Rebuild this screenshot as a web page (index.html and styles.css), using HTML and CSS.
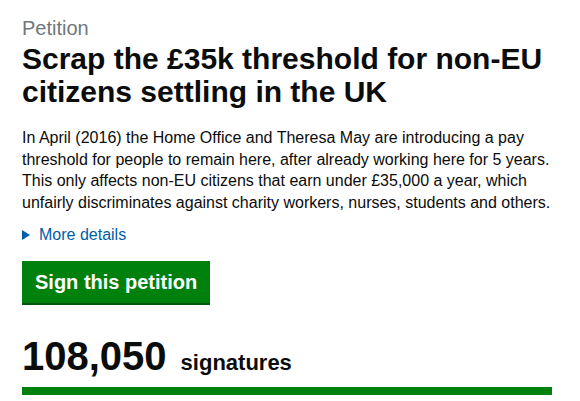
FILE: index.html
```html
<!DOCTYPE html>
<html lang="en">
<head>
<meta charset="utf-8">
<title>Petition</title>
<link rel="stylesheet" href="styles.css">
</head>
<body>
<main class="page">
  <p class="caption">Petition</p>
  <h1 class="title">Scrap the £35k threshold for non-EU citizens settling in the UK</h1>
  <p class="lede">In April (2016) the Home Office and Theresa May are introducing a pay threshold for people to remain here, after already working here for 5 years. This only affects non-EU citizens that earn under £35,000 a year, which unfairly discriminates against charity workers, nurses, students and others.</p>
  <a class="details" href="#"><span class="arrow"></span>More details</a>
  <div class="actions"><a class="button" href="#">Sign this petition</a></div>
  <p class="count"><span class="count-num">108,050</span> <span class="count-label">signatures</span></p>
  <div class="progress"><div class="progress-bar" style="width:100%"></div></div>
</main>
</body>
</html>
```
FILE: styles.css
```css
* { box-sizing: border-box; }
html, body { margin: 0; padding: 0; background: #fff; }
body {
  font-family: "Liberation Sans", Arial, sans-serif;
  color: #0b0c0c;
}
.page {
  padding: 16px 20px 0 22px;
  display: flex;
  flex-direction: column;
  align-items: flex-start;
}
.caption {
  margin: 0;
  font-size: 20px;
  line-height: 24px;
  color: #6f777b;
}
.title {
  margin: 2px 0 0;
  font-size: 30px;
  line-height: 33px;
  font-weight: bold;
}
.lede {
  margin: 19px 0 0;
  font-size: 16px;
  line-height: 21.5px;
}
.details {
  margin-top: 12px;
  display: flex;
  align-items: center;
  color: #005ea5;
  text-decoration: none;
  font-size: 16px;
  line-height: 20px;
}
.arrow {
  width: 0; height: 0;
  border-top: 5px solid transparent;
  border-bottom: 5px solid transparent;
  border-left: 8px solid #005ea5;
  margin-right: 9px;
}
.actions { margin-top: 16px; }
.button {
  display: inline-block;
  background: #00800d;
  color: #fff;
  font-weight: bold;
  font-size: 20px;
  line-height: 22px;
  padding: 10px 13px 10px 13px;
  box-shadow: 0 2px 0 #00550a;
  text-decoration: none;
}
.count {
  margin: 32px 0 0;
  display: flex;
  align-items: baseline;
  gap: 14px;
}
.count-num { font-size: 40px; font-weight: bold; line-height: 42px; }
.count-label { font-size: 22px; font-weight: bold; }
.progress {
  margin-top: 10px;
  width: 530px;
  height: 8px;
  background: #bfc1c3;
}
.progress-bar { height: 100%; background: #00800d; }
```
